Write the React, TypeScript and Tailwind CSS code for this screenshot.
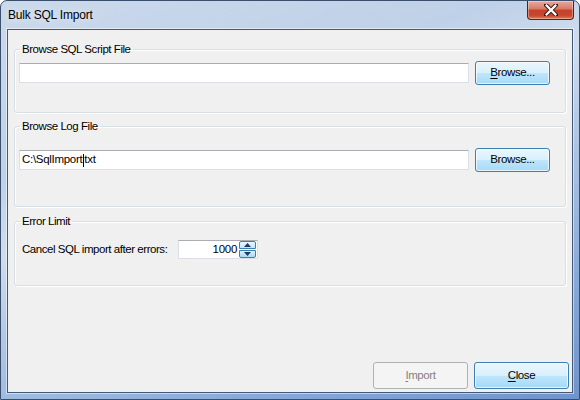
import React from "react";

const font = { fontFamily: "'Liberation Sans', Arial, sans-serif" };

function BlueButton({ label, underline, className }: { label: string; underline?: boolean; className: string }) {
  const first = label[0];
  const rest = label.slice(1);
  return (
    <div
      className={`flex items-center justify-center rounded-[3px] border border-[#3c7fb1] bg-[linear-gradient(to_bottom,#eaf6fd_0%,#d9f0fc_50%,#bee6fd_51%,#a7d9f5_100%)] text-[11.5px] tracking-[-0.4px] text-black shadow-[inset_0_0_0_1px_rgba(255,255,255,0.7)] ${className}`}
    >
      {underline ? (
        <span>
          <span className="underline underline-offset-2">{first}</span>
          {rest}
        </span>
      ) : (
        <span>{label}</span>
      )}
    </div>
  );
}

function TextBox({ value, className }: { value?: string; className: string }) {
  return (
    <div
      className={`flex h-[20px] items-center border border-[#dbdfe6] border-t-[#abadb3] bg-white pl-[2px] text-[11.5px] tracking-[-0.3px] text-black ${className}`}
    >
      {value ? (
        <span className="flex items-center">
          <span>C:\SqlImport</span>
          <span className="mx-[0.5px] inline-block h-[13px] w-[1px] bg-black" />
          <span>txt</span>
        </span>
      ) : null}
    </div>
  );
}

function Group({ title, children, className }: { title: string; children: React.ReactNode; className: string }) {
  return (
    <fieldset
      className={`ml-[6px] w-[552px] rounded-[3px] border border-[#d5dfe5] shadow-[inset_1px_1px_0_#ffffff,1px_1px_0_#ffffff] ${className}`}
    >
      <legend className="ml-[5px] px-[2px] text-[11.5px] leading-[16px] tracking-[-0.45px] text-black">{title}</legend>
      {children}
    </fieldset>
  );
}

export default function App() {
  return (
    <div style={font} className="h-[400px] w-[580px] overflow-hidden bg-white">
      <div className="relative flex h-[400px] w-[580px] flex-col rounded-t-[7px] border border-[#3a4f6c] bg-[linear-gradient(160deg,#cbd9eb_0%,#bfd1e8_30%,#d0ddee_42%,#b3c8e4_55%,#88a9d8_80%,#6f93ca_100%)]">
        <div className="flex h-[28px] items-start">
          <div className="pl-[7px] pt-[6px] text-[12px] leading-[16px] tracking-[-0.2px] text-black [text-shadow:0_0_8px_rgba(255,255,255,0.9)]">
            Bulk SQL Import
          </div>
          <div className="ml-auto mr-[5px] flex h-[19px] w-[47px] items-center justify-center rounded-b-[4px] border border-t-0 border-[#5b1f14] bg-[linear-gradient(to_bottom,#e9a99b_0%,#d67966_45%,#c4412a_50%,#c8472f_80%,#e07a55_100%)] shadow-[inset_0_0_0_1px_rgba(255,255,255,0.35)]">
            <svg width="14" height="12" viewBox="0 0 14 12">
              <path d="M2 1 L12 11 M12 1 L2 11" stroke="#3b1a12" strokeWidth="4.2" strokeLinecap="square" />
              <path d="M2.6 1.6 L11.4 10.4 M11.4 1.6 L2.6 10.4" stroke="#ffffff" strokeWidth="2.2" strokeLinecap="square" />
            </svg>
          </div>
        </div>
        <div className="mx-[6px] flex flex-1 flex-col border border-[#42597a] bg-[#f0f0f0] shadow-[0_0_0_1px_rgba(255,255,255,0.5)]">
          <Group title="Browse SQL Script File" className="mt-[11px] h-[72px]">
            <div className="mt-[4px] flex items-center pl-[4px]">
              <TextBox className="w-[450px]" />
              <BlueButton label="Browse..." underline className="ml-[6px] h-[24px] w-[75px]" />
            </div>
          </Group>
          <Group title="Browse Log File" className="mt-[5px] h-[89px]">
            <div className="mt-[14px] flex items-center pl-[4px]">
              <TextBox value="C:\SqlImport.txt" className="w-[450px]" />
              <BlueButton label="Browse..." className="ml-[6px] h-[24px] w-[75px]" />
            </div>
          </Group>
          <Group title="Error Limit" className="mt-[6px] h-[73px]">
            <div className="mt-[11px] flex items-center pl-[7px]">
              <span className="w-[156px] whitespace-nowrap text-[11.5px] tracking-[-0.45px] text-black">Cancel SQL import after errors:</span>
              <div className="flex h-[19px] w-[80px] items-center border border-[#dbdfe6] border-t-[#abadb3] bg-white">
                <span className="flex-1 pr-[2px] text-right text-[11.5px] tracking-[-0.3px] text-black">1000</span>
                <div className="mr-[1px] flex h-[17px] w-[17px] flex-col">
                  <div className="flex h-[8px] items-center justify-center rounded-t-[2px] border border-[#3c7fb1] bg-[linear-gradient(to_bottom,#eaf6fd,#bee6fd)]">
                    <svg width="7" height="4" viewBox="0 0 7 4"><path d="M3.5 0 L7 4 L0 4 Z" fill="#1e395b" /></svg>
                  </div>
                  <div className="mt-[1px] flex h-[8px] items-center justify-center rounded-b-[2px] border border-[#3c7fb1] bg-[linear-gradient(to_bottom,#d9f0fc,#a7d9f5)]">
                    <svg width="7" height="4" viewBox="0 0 7 4"><path d="M0 0 L7 0 L3.5 4 Z" fill="#1e395b" /></svg>
                  </div>
                </div>
              </div>
            </div>
          </Group>
          <div className="mt-auto mb-[3px] flex justify-end gap-[6px] pr-[3px]">
            <div className="flex h-[27px] w-[95px] items-center justify-center rounded-[3px] border border-[#adb2b5] bg-[#f4f4f4] text-[11.5px] tracking-[-0.4px] text-[#838383]">
              <span>
                <span className="underline underline-offset-2">I</span>mport
              </span>
            </div>
            <BlueButton label="Close" underline className="h-[27px] w-[95px]" />
          </div>
        </div>
        <div className="h-[6px]" />
      </div>
    </div>
  );
}
